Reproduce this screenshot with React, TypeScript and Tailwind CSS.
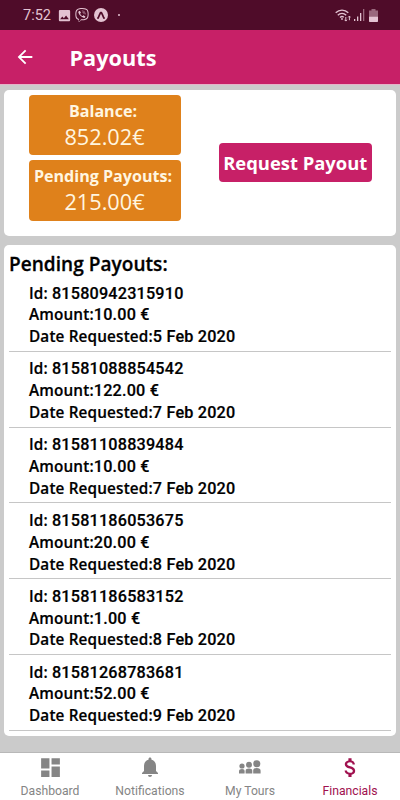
import type { ReactNode } from "react";
import { FaViber } from "react-icons/fa";
import {
  MdArrowBack,
  MdAttachMoney,
  MdDashboard,
  MdImage,
  MdNotifications,
} from "react-icons/md";

const payouts = [
  { id: "81580942315910", amount: "10.00", date: "5 Feb 2020" },
  { id: "81581088854542", amount: "122.00", date: "7 Feb 2020" },
  { id: "81581108839484", amount: "10.00", date: "7 Feb 2020" },
  { id: "81581186053675", amount: "20.00", date: "8 Feb 2020" },
  { id: "81581186583152", amount: "1.00", date: "8 Feb 2020" },
  { id: "81581268783681", amount: "52.00", date: "9 Feb 2020" },
];

function StatusBar() {
  return (
    <div className="flex h-[30px] shrink-0 items-center bg-[#4f0c29] pl-[23px] pr-[22px] font-[family-name:Roboto] text-[#e3c3d2]">
      <span className="w-[35px] pt-[2px] text-[14.5px] leading-none">7:52</span>
      <MdImage className="-ml-px h-[15px] w-[15px]" />
      <FaViber className="ml-[3px] h-[14px] w-[14px]" />
      <svg viewBox="0 0 14 14" className="ml-[4.5px] h-[14px] w-[14px]">
        <circle cx="7" cy="7" r="7" fill="currentColor" />
        <path d="M4 10C5 9 6 4.4 7 4.4S9 9 10 10" fill="none" stroke="#4f0c29" strokeWidth="1.8" strokeLinecap="round" />
      </svg>
      <span className="ml-[10.5px] h-[2px] w-[2px] rounded-full bg-current" />

      <svg viewBox="0 0 16 13" className="ml-auto h-[13px] w-[16px]" fill="none" stroke="currentColor">
        <path d="M.7 3.8C4.2.2 9.8.2 13.3 3.8M2.8 6.2c2.4-2.4 6-2.4 8.4 0M5 8.5c1.2-1.2 2.6-1.3 3.8-.3" strokeWidth="1.3" />
        <circle cx="7" cy="10" r=".9" fill="currentColor" stroke="none" />
        <path d="M10.8 8v4M9.6 10.8l1.2 1.3 1.2-1.3M14.4 11.2v-4M13.2 8.4l1.2-1.3 1.2 1.3" strokeWidth="1" />
      </svg>
      <svg viewBox="0 0 11 12" className="ml-[3px] h-[12px] w-[11px]" fill="currentColor">
        <path d="M0 10h1.3v2H0zM3 7.5h1.3V12H3zM6 4h1.3v8H6z" />
        <path d="M9 0h1.3v12H9z" opacity=".5" />
      </svg>
      <svg viewBox="0 0 9 13" className="ml-1 h-[13px] w-[9px]" fill="currentColor">
        <path d="M2.5 0h4v1.5H9v6H0v-6h2.5z" opacity=".5" />
        <path d="M0 7.5h9v4.8a.7.7 0 0 1-.7.7H.7a.7.7 0 0 1-.7-.7z" />
      </svg>
    </div>
  );
}

function Stat({ label, value }: { label: string; value: string }) {
  return (
    <div className="flex h-[60.5px] w-[152px] flex-col items-center rounded-[4px] bg-[#df811b] text-[#fff6e0]">
      <p className="-ml-[3px] mt-[5px] whitespace-nowrap text-[16.1px] font-bold leading-[23px]">{label}</p>
      <p className="text-[21.7px] leading-[28px]">{value}</p>
    </div>
  );
}

function Line({ label, value }: { label: string; value: string }) {
  return (
    <p className="flex h-[21.8px] items-baseline whitespace-pre leading-[21.8px] [-webkit-text-stroke:0.2px]">
      <span className="text-[15.3px] font-semibold tracking-[0.15px]">{label}</span>
      <span className="font-[family-name:Roboto] text-[16.2px] font-medium tracking-[0.2px]">{value}</span>
    </p>
  );
}

function MyToursIcon() {
  return (
    <svg viewBox="0 0 22 14" className="h-[14px] w-[22px]" fill="currentColor">
      <circle cx="3" cy="6" r="2.6" />
      <path d="M0 13.5v-2.2C0 9.7 1.2 9 3 9s2.6.7 2.6 2.3v2.2z" />
      <circle cx="10" cy="4.8" r="3" />
      <path d="M6.6 13.5v-2.6c0-1.8 1.3-2.5 3.4-2.5s3.3.7 3.3 2.5v2.6z" />
      <circle cx="17.8" cy="3.7" r="3.5" />
      <path d="M14.2 13.5v-2.8c0-2 1.4-2.8 3.6-2.8s3.8.8 3.8 2.8v2.8z" />
    </svg>
  );
}

function Tab({ label, icon, active }: { label: string; icon: ReactNode; active?: boolean }) {
  return (
    <div className={`flex flex-1 flex-col items-center ${active ? "text-[#a0114f]" : "text-[#858585]"}`}>
      <div className="flex h-[29px] items-center">{icon}</div>
      <span className="mt-[2px] font-[family-name:Roboto] text-[12.2px] leading-[15px]">{label}</span>
    </div>
  );
}

export default function App() {
  return (
    <div className="flex h-[800px] w-[400px] flex-col overflow-hidden bg-[#cbcbcb] font-['Open_Sans',sans-serif]">
      <StatusBar />
      <header className="flex h-[54px] shrink-0 items-center bg-[#c72067] pl-[14px] text-white">
        <MdArrowBack className="h-[22px] w-[22px]" />
        <h1 className="ml-[33.5px] pt-px text-[21.7px] font-bold leading-none">Payouts</h1>
      </header>
      <div className="h-px shrink-0 bg-[#e5b3c8]" />

      <section className="mx-1 mt-[4.5px] flex h-[146.5px] shrink-0 justify-between rounded-[5px] bg-white px-[24.5px]">
        <div className="flex flex-col gap-[5px] pt-[5px]">
          <Stat label="Balance:" value="852.02€" />
          <Stat label="Pending Payouts:" value="215.00€" />
        </div>
        <button className="mt-[53.5px] h-[39px] w-[152.5px] whitespace-nowrap rounded-[4px] bg-[#c72067] pt-[2px] text-[18.4px] font-bold leading-none text-white">
          Request Payout
        </button>
      </section>

      <section className="mx-1 mt-[9px] h-[491px] shrink-0 rounded-[5px] bg-white px-[5px] text-black">
        <h2 className="h-[31px] pt-[6px] text-[19px] font-semibold leading-[26px] tracking-[0.05px] [-webkit-text-stroke:0.3px]">
          Pending Payouts:
        </h2>
        {payouts.map((p) => (
          <div key={p.id} className="h-[75.8px] border-b border-[#c6c6c6] pl-[20px] pt-[6.6px]">
            <Line label="Id: " value={p.id} />
            <Line label="Amount:" value={`${p.amount} €`} />
            <Line label="Date Requested:" value={p.date} />
          </div>
        ))}
      </section>

      <nav className="mt-auto flex h-[48.5px] shrink-0 border-t border-[#b8b8b8] bg-white">
        <Tab label="Dashboard" icon={<MdDashboard className="h-[25px] w-[25px]" />} />
        <Tab label="Notifications" icon={<MdNotifications className="h-[24px] w-[24px]" />} />
        <Tab label="My Tours" icon={<MyToursIcon />} />
        <Tab label="Financials" icon={<MdAttachMoney className="h-[25px] w-[25px]" />} active />
      </nav>
    </div>
  );
}
